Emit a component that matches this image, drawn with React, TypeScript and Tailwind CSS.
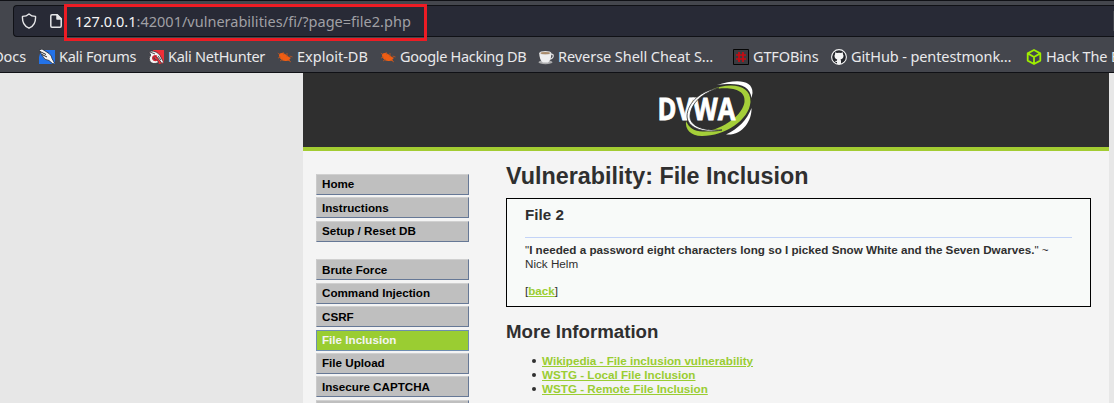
import type { ReactNode } from "react";

function ShieldIcon() {
  return (
    <svg className="ml-[7px] h-4 w-4 shrink-0" viewBox="0 0 16 16" fill="none" stroke="#e6e6e8" strokeWidth="1.4" strokeLinejoin="round">
      <path d="M8 .9Q10.5 3.2 14.5 3.4 14.8 7.5 13.2 10.6 11.7 13.5 8 15.2 4.3 13.5 2.8 10.6 1.2 7.5 1.5 3.4 5.5 3.2 8 .9Z" />
    </svg>
  );
}

function PageIcon() {
  return (
    <svg className="ml-[13px] h-4 w-3 shrink-0" viewBox="0 0 12 16" fill="none" stroke="#e6e6e8" strokeWidth="1.5" strokeLinejoin="round">
      <path d="M2 1.7H7.2L11.2 5.7V13.1Q11.2 14.3 10 14.3H2Q.8 14.3 .8 13.1V2.9Q.8 1.7 2 1.7Z" />
      <path d="M7 1.9V5.9H11Z" fill="#e6e6e8" />
    </svg>
  );
}

function KaliIcon() {
  return (
    <svg className="h-4 w-4" viewBox="0 0 16 16">
      <path d="M2 1H16V15H0V8Z" fill="#2372e8" />
      <path d="M0 1 3 0 10 4.5Q13 7 13 9.5L15.5 14 14 15 10 11.5Q5 11 3.5 7Z" fill="#f5f5f5" stroke="#17191f" strokeWidth=".7" />
      <path d="M1 2.5 7 5.5M3 5.5 8 8" stroke="#25272c" strokeWidth="1" />
    </svg>
  );
}

function NetHunterIcon() {
  return (
    <svg className="h-4 w-4" viewBox="0 0 16 16" fill="none">
      <path d="M5 1H16V14L11 15 4 5Z" fill="#ee2f38" />
      <path d="M1 3 3 2Q9 2 12 6.5L15.5 13 14 14.5 9.5 8.5Q6.5 6 5 8 4 10.5 6.5 11.5L9 10.5 10.5 13.5Q5 16 2 12.5 0 9 2.8 6Z" fill="#f4f4f4" stroke="#272229" strokeWidth=".7" />
      <path d="M9 7.2Q6.2 6 5 8 4.3 11 7.3 11.6L9.2 11" stroke="#d62532" strokeWidth="1.5" />
      <path d="M2 3 7 5M10 7 13 11" stroke="#24252a" strokeWidth=".8" />
    </svg>
  );
}

function ExploitIcon() {
  return (
    <svg className="h-4 w-4" viewBox="0 0 16 16">
      <path d="M2 5Q5 2.8 8 5L12 8 14 9 12.4 10.2 13 12 10.5 11.7Q6 13 3.2 9.5Q1.5 7.5 2 5Z" fill="#ef5d13" />
      <path d="M.8 4 3 6M6 3 7 6M10 4 10 8M12.5 7 15.5 8M1 9 4 8M3 12 6 10M11 11 14 13" stroke="#c45520" strokeWidth=".8" />
    </svg>
  );
}

function CupIcon() {
  return (
    <svg className="h-4 w-4" viewBox="0 0 16 16">
      <ellipse cx="7.5" cy="13.2" rx="7" ry="2" fill="#aaaaac" />
      <path d="M12 5.2Q16 4.5 15 8 14 10.5 11 10" fill="none" stroke="#dcdcdd" strokeWidth="1.3" />
      <path d="M1.2 4H13.4Q13.4 11 10 13.5H4.8Q1.4 11 1.2 4Z" fill="#eeeeef" />
      <ellipse cx="7.3" cy="4" rx="6" ry="2" fill="#dedede" />
      <ellipse cx="7.3" cy="4.1" rx="4.8" ry="1.2" fill="#a98b6c" />
    </svg>
  );
}

function HashIcon() {
  return (
    <svg className="h-4 w-4" viewBox="0 0 16 16" fill="none">
      <path d="M.5 .5H15.5V15.5H.5Z" fill="#3b3b40" stroke="#050505" />
      <path d="M6 3V13M10 3V13M3 6H13M3 10H13" stroke="#c90a12" strokeWidth="1.7" />
    </svg>
  );
}

function GitHubIcon() {
  return (
    <svg className="h-4 w-4" viewBox="0 0 16 16">
      <circle cx="8" cy="8" r="7.4" fill="#24262b" stroke="#f4f4f4" strokeWidth="1.1" />
      <path d="M4.2 3.2 6 4.1Q8 3.6 10 4.1L11.8 3.2 12 5.3Q13 6.6 12.2 8.5 11.5 10.2 9.5 10.5 10 11 10 12V15H6V13Q4.2 13 3.8 11.8L5 12Q6 12.2 6.2 10.5 4.4 10 3.8 8.5 3 6.6 4 5.3Z" fill="#f4f4f4" />
    </svg>
  );
}

function BoxIcon() {
  return (
    <svg className="h-4 w-4" viewBox="0 0 16 16" fill="none" stroke="#9fef00" strokeWidth="1.8" strokeLinejoin="round">
      <path d="M8 1 14.3 4.4V11.6L8 15 1.7 11.6V4.4ZM1.7 4.4 8 8 14.3 4.4M8 8V15" />
    </svg>
  );
}

function Bookmark({ icon, label, className }: { icon: ReactNode; label: string; className: string }) {
  return (
    <div className={`flex shrink-0 items-center ${className}`}>
      {icon}
      <span className="ml-1 whitespace-nowrap">{label}</span>
    </div>
  );
}

function Logo() {
  return (
    <svg className="mt-[3px] h-[66px] w-[112px]" viewBox="0 0 112 66">
      <path d="M67 9C85 3 103 3 102.5 17L101.5 22C100 9 88 6 67 9Z" fill="#fff" />
      <path d="M101.5 32C102 45 92 60 76 58.5C88 53 97 44 101.5 32Z" fill="#fff" />
      <path d="M60 14C80 6 101 8 100.5 26C99 44 75 60 52 60C40 60 35 53 36 45C39 52 45 56 54 55.5C75 53 93 38 94.5 26C96 12 78 10 60 14Z" fill="#a5cf39" />
      <text x="7.5" y="44" textLength="78" lengthAdjust="spacingAndGlyphs" fill="#fff" className="font-['Open_Sans',sans-serif] text-[30.5px] font-bold" stroke="#fff" strokeWidth=".8">DVWA</text>
      <path d="M69 12C52 17 41 27 40 40C40 50 52 55 72 54C52 58 37 51 37 40C37.5 26 52 14 69 12Z" fill="#fff" stroke="#2f2f2f" strokeWidth=".8" />
    </svg>
  );
}

function MenuItem({ label, active = false }: { label: string; active?: boolean }) {
  return (
    <li className={`h-[21px] shrink-0 border pt-[0.45px] pl-[5px] text-[11.65px] leading-[18px] font-bold ${active ? "border-[#6f8eb0] bg-[#9acd32] text-[#f4f4f4]" : "border-t-[#d0d0d0] border-r-[#667896] border-b-[#667896] border-l-[#cacaca] bg-[#bfbfbf] text-black"}`}>
      {label}
    </li>
  );
}

function Link({ children }: { children: ReactNode }) {
  return <a href="#" className="font-bold text-[#9acd32] underline">{children}</a>;
}

function Reference({ label }: { label: string }) {
  return (
    <li className="flex items-center">
      <span className="mr-[6px] size-1 rounded-full bg-[#2f2f2f]" />
      <Link>{label}</Link>
    </li>
  );
}

export default function App() {
  return (
    <div className="flex h-[403px] w-[1114px] flex-col overflow-hidden bg-[#e7e7e7] font-['Liberation_Sans',Arial,sans-serif] text-[#2f2f2f]">
      <header className="h-[73px] shrink-0 border-t border-b border-[#101116] bg-[#44464d] font-['Noto_Sans',sans-serif]">
        <div className="pt-1 pl-[13px]">
          <div className="relative flex h-8 items-center rounded-l-[4px] border border-r-0 border-[#101116] bg-[#282a36]">
            <ShieldIcon />
            <PageIcon />
            <div className="ml-[13px] pt-[2px] text-[14.5px] tracking-[0.01px] text-[#a0a0a5]"><span className="text-[#f5f5f5]">127.0.0.1</span>:42001/vulnerabilities/fi/?page=file2.php</div>
            <div className="absolute top-[-2px] left-[50px] h-[37px] w-[363px] border-[3px] border-[#ed1c24]" />
            <div className="absolute top-[5px] right-0 h-5 w-px bg-[#44464d]" />
          </div>
        </div>
        <nav className="flex h-[35px] items-center pt-1 text-[14.5px] text-[#e9e9eb]">
          <span className="flex w-[39px] shrink-0 justify-end pr-[13px] tracking-[-0.1px]">Docs</span>
          <Bookmark icon={<KaliIcon />} label="Kali Forums" className="w-[109px] tracking-[-0.27px]" />
          <Bookmark icon={<NetHunterIcon />} label="Kali NetHunter" className="w-[129px] tracking-[-0.27px]" />
          <Bookmark icon={<ExploitIcon />} label="Exploit-DB" className="w-[103px]" />
          <Bookmark icon={<ExploitIcon />} label="Google Hacking DB" className="w-[158px] tracking-[-0.31px]" />
          <Bookmark icon={<CupIcon />} label="Reverse Shell Cheat S…" className="w-[195px] tracking-[-0.06px]" />
          <Bookmark icon={<HashIcon />} label="GTFOBins" className="w-[98px] tracking-[-0.13px]" />
          <Bookmark icon={<GitHubIcon />} label="GitHub - pentestmonk…" className="w-[195px] tracking-[-0.1px]" />
          <Bookmark icon={<BoxIcon />} label="Hack The Box" className="w-[120px] tracking-[-0.15px]" />
        </nav>
      </header>
      <main className="ml-[303px] flex min-h-0 w-[806px] flex-1 flex-col bg-[#f4f4f4]">
        <div className="flex h-[78px] shrink-0 justify-center border-b-4 border-[#a3cc32] bg-[#2f2f2f]">
          <Logo />
        </div>
        <div className="flex min-h-0 flex-1">
          <aside className="ml-[13px] w-[153px] shrink-0 pt-[22.9px]">
            <ul className="flex flex-col gap-[2.45px]">
              <MenuItem label="Home" />
              <MenuItem label="Instructions" />
              <MenuItem label="Setup / Reset DB" />
            </ul>
            <ul className="mt-[17.45px] flex flex-col gap-[2.45px]">
              <MenuItem label="Brute Force" />
              <MenuItem label="Command Injection" />
              <MenuItem label="CSRF" />
              <MenuItem label="File Inclusion" active />
              <MenuItem label="File Upload" />
              <MenuItem label="Insecure CAPTCHA" />
              <MenuItem label="SQL Injection" />
            </ul>
          </aside>
          <section className="ml-[37px] w-[585px] shrink-0 pt-[11px] text-[11.67px] leading-[14px]">
            <h1 className="text-[23.33px] leading-7 font-bold">Vulnerability: File Inclusion</h1>
            <div className="mt-2 h-[109px] border border-black bg-[#f8faf9] px-[18px] pt-[7px]">
              <h3 className="text-[15.2px] leading-[18px] font-bold">File 2</h3>
              <hr className="mt-[13px] border-[#c3d3f7]" />
              <p className="mt-[5px]">"<b>I needed a password eight characters long so I picked Snow White and the Seven Dwarves.</b>" ~<br />Nick Helm</p>
              <p className="mt-[13px]">[<Link>back</Link>]</p>
            </div>
            <h2 className="mt-[14px] text-[18.67px] leading-[22px] font-bold">More Information</h2>
            <ul className="mt-[11px] pl-[26px]">
              <Reference label="Wikipedia - File inclusion vulnerability" />
              <Reference label="WSTG - Local File Inclusion" />
              <Reference label="WSTG - Remote File Inclusion" />
            </ul>
          </section>
        </div>
      </main>
    </div>
  );
}
